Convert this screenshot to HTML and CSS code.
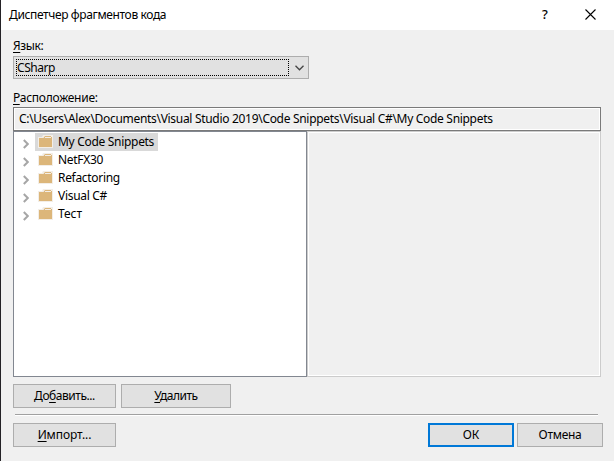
FILE: index.html
```html
<!DOCTYPE html>
<html lang="ru">
<head>
<meta charset="utf-8">
<title>Диспетчер фрагментов кода</title>
<link rel="stylesheet" href="styles.css">
</head>
<body>
<svg width="0" height="0" class="defs" aria-hidden="true">
  <symbol id="chevron" viewBox="0 0 6 10"><path d="M.8 1l4 4-4 4" fill="none" stroke="#a6a6a6" stroke-width="2"/></symbol>
  <symbol id="folder" viewBox="0 0 15 13"><path d="M0 2h4l1-2h10v13H0z" fill="#f3eee7"/><path d="M1 3h4.5L7 1h6v1h1v10H1z" fill="#dcb67a"/><path d="M7 2.5h6" stroke="#f3eee7"/></symbol>
</svg>
<main class="dialog">
  <header class="titlebar">
    <h1 class="title">Диспетчер фрагментов кода</h1>
    <span class="help">?</span>
    <svg class="close" width="11" height="11" viewBox="0 0 11 11"><path d="M.5.5l10 10M10.5.5l-10 10" stroke="#000" stroke-width="1.1" fill="none"/></svg>
  </header>
  <section class="content">
    <label class="label language"><u>Я</u>зык:</label>
    <div class="combo">
      <div class="combo-value">CSharp</div>
      <svg class="arrow" width="9" height="6" viewBox="0 0 9 6"><path d="M.5.8l4 4 4-4" fill="none" stroke="#444" stroke-width="1.3"/></svg>
    </div>
    <label class="label location"><u>Р</u>асположение:</label>
    <div class="path">C:\Users\Alex\Documents\Visual Studio 2019\Code Snippets\Visual C#\My Code Snippets</div>
    <div class="panes">
      <ul class="tree">
        <li class="row selected"><svg class="chev"><use href="#chevron"/></svg><span class="item"><svg class="folder"><use href="#folder"/></svg><span>My Code Snippets</span></span></li>
        <li class="row"><svg class="chev"><use href="#chevron"/></svg><span class="item"><svg class="folder"><use href="#folder"/></svg><span>NetFX30</span></span></li>
        <li class="row"><svg class="chev"><use href="#chevron"/></svg><span class="item"><svg class="folder"><use href="#folder"/></svg><span>Refactoring</span></span></li>
        <li class="row"><svg class="chev"><use href="#chevron"/></svg><span class="item"><svg class="folder"><use href="#folder"/></svg><span>Visual C#</span></span></li>
        <li class="row"><svg class="chev"><use href="#chevron"/></svg><span class="item"><svg class="folder"><use href="#folder"/></svg><span class="cyrillic">Тест</span></span></li>
      </ul>
      <div class="details"></div>
    </div>
    <div class="actions">
      <button class="btn add">До<u>б</u>авить...</button>
      <button class="btn remove"><u>У</u>далить</button>
    </div>
    <div class="separator"></div>
    <footer class="footer">
      <button class="btn import"><u>И</u>мпорт...</button>
      <button class="btn ok">ОК</button>
      <button class="btn cancel">Отмена</button>
    </footer>
  </section>
</main>
</body>
</html>
```
FILE: styles.css
```css
* { box-sizing: border-box; }
body {
  margin: 0;
  font: 12px/18px "Noto Sans", "Open Sans", sans-serif;
  letter-spacing: -0.305px;
  color: #000;
  background: #f0f0f0;
}
.defs { position: absolute; }
svg { flex: none; display: block; }
span { white-space: nowrap; }
u { text-decoration: underline; text-underline-offset: 2px; text-decoration-thickness: 1px; text-decoration-skip-ink: none; }
.dialog { width: 614px; height: 461px; border-left: 1px solid #242226; overflow: hidden; }
.titlebar { height: 30px; background: #fff; display: flex; align-items: center; padding: 0 18px 2px 8px; }
.title { margin: 2px 0 0; font-size: 12px; font-weight: 400; flex: 1; letter-spacing: -0.37px; }
.help { width: 7px; font-size: 13px; margin-right: 36px; font-weight: 500; }
.content { padding: 0 0 0 12px; }
.label { display: block; height: 18px; }
.language { margin-top: 7px; letter-spacing: -0.4px; }
.combo { margin-top: 1px; width: 296px; height: 23px; border: 1px solid #adadad; background: #e1e1e1; display: flex; align-items: center; padding: 0 4px 0 2px; justify-content: space-between; }
.combo-value { width: 273px; height: 17px; border: 1px dotted #000; line-height: 16px; letter-spacing: -0.45px; }
.location { margin-top: 10px; letter-spacing: -0.25px; }
.path { width: 588px; height: 24px; border: 1px solid #7a7a7a; box-shadow: inset 0 0 0 1px #fff; padding-left: 5px; line-height: 21px; white-space: nowrap; }
.panes { display: flex; width: 588px; height: 246px; }
.tree { margin: 0; width: 294px; border: 1px solid #828790; background: #fff; padding: 1px 0 0 9px; list-style: none; }
.details { flex: 1; border: 1px solid #ccc; box-shadow: inset 0 0 0 1px #fff; }
.row { height: 18px; display: flex; align-items: center; }
.chev { width: 6px; height: 10px; margin: 3px 6px 0 0; }
.item { height: 18px; display: flex; align-items: center; padding: 0 4px 0 3px; }
.selected .item { background: #d9d9d9; }
.folder { width: 15px; height: 13px; margin: 0 5px 1px 0; }
.cyrillic { letter-spacing: -0.1px; }
.actions { margin-top: 7px; display: flex; gap: 5px; }
.btn { width: 103px; height: 24px; padding: 0; border: 1px solid #adadad; background: #e1e1e1; font: inherit; line-height: 20px; letter-spacing: -0.3px; color: #000; }
.add { letter-spacing: -0.45px; }
.remove { width: 110px; letter-spacing: -0.5px; }
.import { letter-spacing: -0.1px; }
.separator { width: 583px; height: 2px; margin: 6px 0 7px 2px; border-top: 1px solid #a0a0a0; border-bottom: 1px solid #fff; }
.footer { display: flex; width: 590px; }
.ok { width: 86px; margin-left: auto; border: 2px solid #0078d7; line-height: 18px; letter-spacing: 0; }
.cancel { width: 86px; margin-left: 3px; }
```
